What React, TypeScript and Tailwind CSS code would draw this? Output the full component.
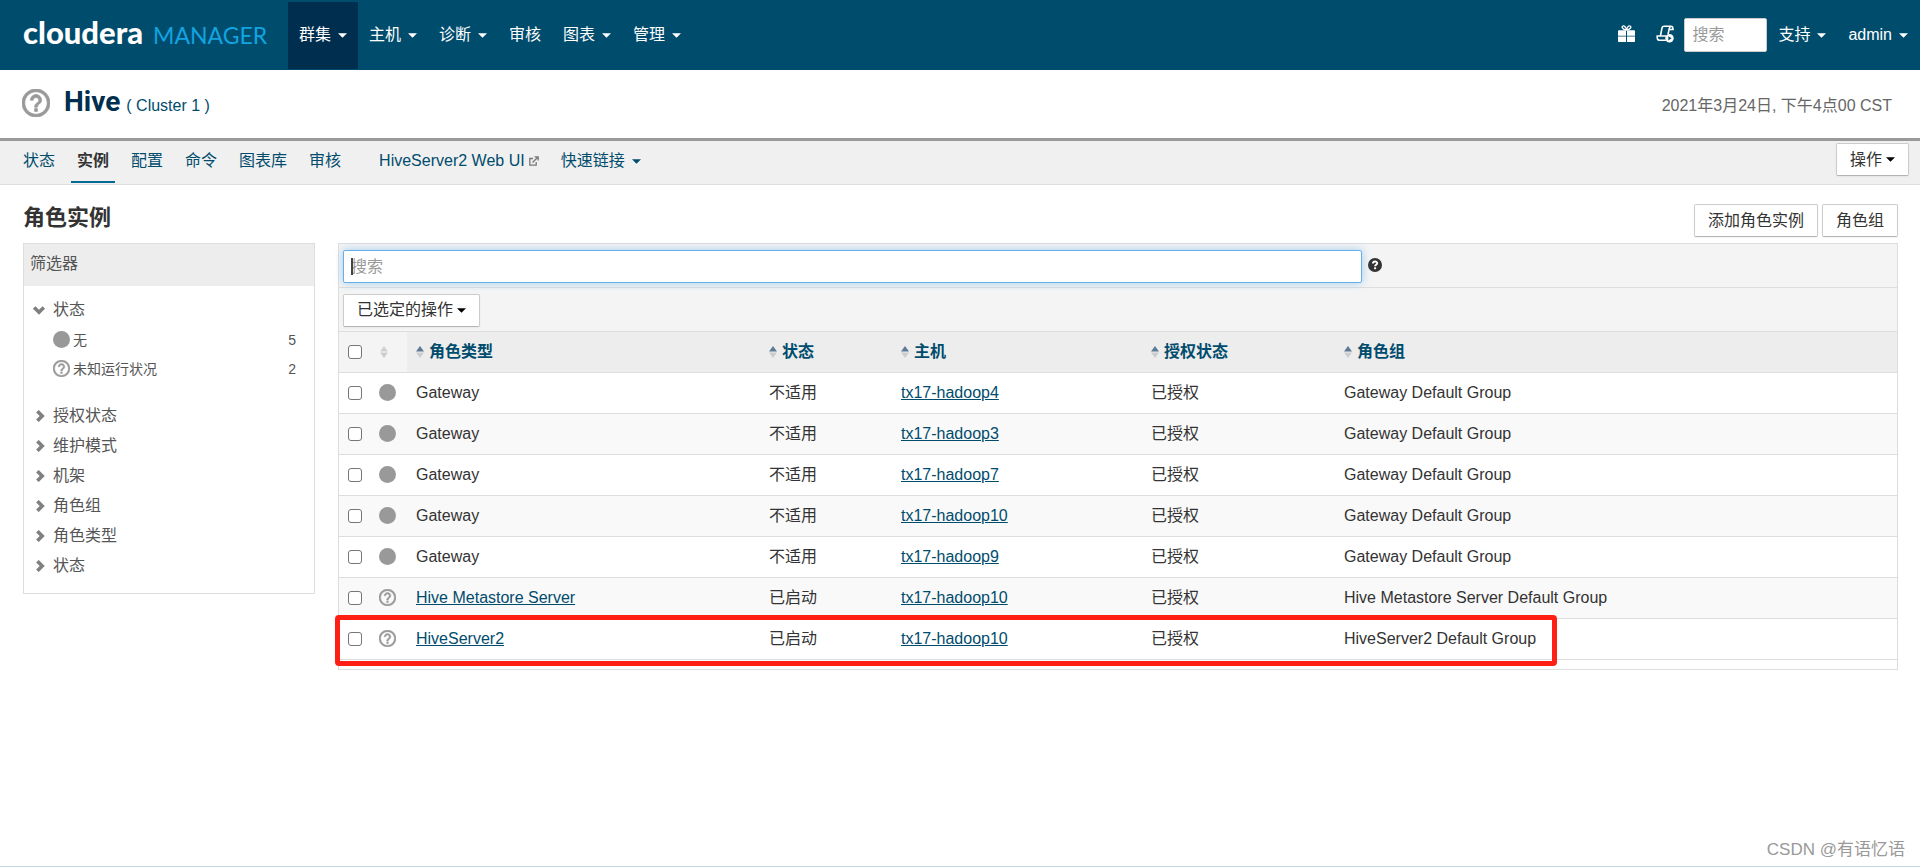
import type { ReactNode } from 'react';

const HELP_PATH =
  'M11 18h2v-2h-2v2zm1-16C6.48 2 2 6.48 2 12s4.48 10 10 10 10-4.48 10-10S17.52 2 12 2zm0 18c-4.41 0-8-3.59-8-8s3.59-8 8-8 8 3.59 8 8-3.59 8-8 8zm0-14c-2.21 0-4 1.79-4 4h2c0-1.1.9-2 2-2s2 .9 2 2c0 2-3 1.75-3 5h2c0-2.25 3-2.5 3-5 0-2.21-1.79-4-4-4z';

function Caret() {
  return (
    <svg viewBox="0 0 9 5" className="h-[5px] w-[9px] shrink-0" fill="currentColor" aria-hidden="true">
      <path d="M0 .3h9L4.500 4.800z" />
    </svg>
  );
}

function UnknownIcon({ className }: { className: string }) {
  return (
    <svg viewBox="2 2 20 20" className={className} fill="#999" aria-hidden="true">
      <path d={HELP_PATH} stroke="#999" strokeWidth="0.5" />
    </svg>
  );
}

function HealthIcon({ unknown }: { unknown: boolean }) {
  if (unknown) return <UnknownIcon className="size-[17px] shrink-0" />;
  return <span className="block size-[17px] shrink-0 rounded-full bg-[#999]" />;
}

function Chevron({ open }: { open?: boolean }) {
  return (
    <svg viewBox="0 0 12 12" className="size-3 shrink-0" fill="none" stroke="#808080" strokeWidth="3.6" aria-hidden="true">
      <path d={open ? 'M1.2 3.4 6 8.2l4.8-4.8' : 'M4.4 1.2 9.200 6l-4.8 4.8'} />
    </svg>
  );
}

function SortIcon({ faint }: { faint?: boolean }) {
  return (
    <svg viewBox="0 0 8 12" className="h-3 w-2 shrink-0" aria-hidden="true">
      <path d="M4 0 8 5.5H0z" fill={faint ? '#cfd1d3' : '#5d7a94'} />
      <path d="M4 12 8 6.5H0z" fill="#cbcdcf" />
    </svg>
  );
}

function Button({ children, caret }: { children: ReactNode; caret?: boolean }) {
  return (
    <button
      type="button"
      className="flex h-[33px] items-center gap-1 rounded-xs border border-[#ccc] border-b-[#b5b5b5] bg-white px-[13px] text-[#333] shadow-xs"
    >
      {children}
      {caret && (
        <span className="text-black">
          <Caret />
        </span>
      )}
    </button>
  );
}

const NAV = [
  { label: '群集', menu: true, active: true },
  { label: '主机', menu: true },
  { label: '诊断', menu: true },
  { label: '审核' },
  { label: '图表', menu: true },
  { label: '管理', menu: true },
];

function TopBar() {
  return (
    <header className="flex h-[70px] items-center bg-[#004c6d] pr-3 text-white">
      <a href="#home" className="flex w-[288px] items-baseline gap-2.5 pb-1 pl-[23px] leading-8">
        <span className="font-[Lato] text-[31px] font-black">cloudera</span>
        <span className="font-[Lato] text-[23px] text-[#12a4e0]">MANAGER</span>
      </a>
      <nav className="flex">
        {NAV.map((item) => (
          <a
            key={item.label}
            href="#nav"
            className={
              item.active
                ? 'flex h-[67px] items-center gap-[7px] bg-[#002e4f] px-[11px]'
                : 'flex h-[67px] items-center gap-[7px] px-[11px]'
            }
          >
            {item.label}
            {item.menu && <Caret />}
          </a>
        ))}
      </nav>
      <div className="ml-auto flex items-center">
        <button type="button" aria-label="新增功能" className="mr-[21px] mb-1">
          <svg viewBox="0 0 17 17" className="size-[17px]" fill="#fff" aria-hidden="true">
            <path d="M0 6q0-.8.8-.8H8v5.600H0zM9 5.200h7.200q.8 0 .8.800v4.800H9zM0 11.600h8V17H.8Q0 17 0 16.200zM9 11.600h8v4.600q0 .8-.8.8H9z" />
            <path
              d="M8.500 5.200C8 2.200 6.300.3 4.900 1 3.300 2 4.300 4.400 8.500 5.200 12.700 4.400 13.700 2 12.100 1 10.700.3 9 2.200 8.500 5.200z"
              fill="none"
              stroke="#fff"
              strokeWidth="1.3"
            />
          </svg>
        </button>
        <button type="button" aria-label="正在运行的命令" className="mr-[10px] mb-0.5">
          <svg viewBox="0 0 18 18" className="size-[18px]" fill="none" stroke="#fff" strokeWidth="1.6" aria-hidden="true">
            <path d="M4.500 10.500 6 3q.4-1.700 2-1.700h7.500q-1.800.2-2.200 2L12 9.500M15 1.300q2 0 2 3.200h-3.500M10 11H1.200q-.3 4 2 4.200h7" />
            <circle cx="13.5" cy="13.3" r="4.2" fill="#fff" stroke="none" />
            <path d="M12.300 11.200v4.200l3.300-2.100z" fill="#004c6d" stroke="none" />
          </svg>
        </button>
        <input
          aria-label="全局搜索"
          placeholder="搜索"
          className="h-[34px] w-[83px] rounded-xs border border-[#ccc] bg-white px-[7px] text-[#333] placeholder:text-[#999]"
        />
        <a href="#support" className="flex items-center gap-[7px] px-[11px]">
          支持
          <Caret />
        </a>
        <a href="#admin" className="flex items-center gap-[7px] pl-[11px]">
          admin
          <Caret />
        </a>
      </div>
    </header>
  );
}

function TitleBar() {
  return (
    <div className="flex h-[71px] items-center border-b-3 border-[#999] pr-7 pl-[22px]">
      <UnknownIcon className="mb-0.5 size-7" />
      <div className="ml-3.5 flex items-baseline gap-1.5 leading-8">
        <h1 className="font-[Roboto] text-[28px] font-bold text-[#002e4f]">Hive</h1>
        <a href="#cluster" className="text-[#004c6d]">
          ( Cluster 1 )
        </a>
      </div>
      <time className="mt-1 ml-auto text-[#666]">2021年3月24日, 下午4点00 CST</time>
    </div>
  );
}

const TABS = ['状态', '实例', '配置', '命令', '图表库', '审核'];

function TabBar() {
  return (
    <div className="flex h-11 justify-between border-b border-[#ddd] bg-[#f0f0f0] pr-[11px] pl-[17px]">
      <nav className="flex gap-2.5 text-[#004c6d]">
        {TABS.map((tab) => (
          <a
            key={tab}
            href="#tab"
            className={
              tab === '实例'
                ? 'flex h-[42px] items-center border-b-2 border-[#006a94] px-1.5 font-bold text-[#333]'
                : 'flex h-10 items-center px-1.5'
            }
          >
            {tab}
          </a>
        ))}
        <a href="#webui" className="ml-4 flex h-10 items-center gap-1 px-1.5">
          HiveServer2 Web UI
          <svg viewBox="0 0 10 10" className="size-2.5" fill="none" stroke="#777" strokeWidth="1.3" aria-hidden="true">
            <path d="M4 2.500H.8v6.700h6.400V6M3.500 6.500 9 1M5.500.8h3.700v3.700" />
          </svg>
        </a>
        <a href="#links" className="flex h-10 items-center gap-[7px] px-1.5">
          快速链接
          <Caret />
        </a>
      </nav>
      <div className="pt-0.5">
        <Button caret>操作</Button>
      </div>
    </div>
  );
}

const FILTERS = ['授权状态', '维护模式', '机架', '角色组', '角色类型', '状态'];

function FilterPanel() {
  return (
    <aside className="w-[292px] shrink-0 border border-[#ddd] pb-3 text-[#555]">
      <h3 className="flex h-[42px] items-center bg-[#ededed] px-1.5 pb-0.5">筛选器</h3>
      <button type="button" className="mt-[9px] flex h-[30px] w-full items-center gap-2 pl-[9px]">
        <Chevron open />
        状态
      </button>
      <ul className="mb-[18px] pr-[18px] pl-[29px] text-sm">
        <li className="flex h-[29px] items-center gap-[3px]">
          <HealthIcon unknown={false} />
          无<span className="ml-auto">5</span>
        </li>
        <li className="flex h-[29px] items-center gap-[3px]">
          <HealthIcon unknown />
          未知运行状况<span className="ml-auto">2</span>
        </li>
      </ul>
      {FILTERS.map((name, i) => (
        <button key={i} type="button" className="flex h-[30px] w-full items-center gap-2 pl-[9px]">
          <Chevron />
          {name}
        </button>
      ))}
    </aside>
  );
}

const ROWS = [
  { role: 'Gateway', status: '不适用', host: 'tx17-hadoop4', group: 'Gateway Default Group' },
  { role: 'Gateway', status: '不适用', host: 'tx17-hadoop3', group: 'Gateway Default Group' },
  { role: 'Gateway', status: '不适用', host: 'tx17-hadoop7', group: 'Gateway Default Group' },
  { role: 'Gateway', status: '不适用', host: 'tx17-hadoop10', group: 'Gateway Default Group' },
  { role: 'Gateway', status: '不适用', host: 'tx17-hadoop9', group: 'Gateway Default Group' },
  { role: 'Hive Metastore Server', status: '已启动', host: 'tx17-hadoop10', group: 'Hive Metastore Server Default Group' },
  { role: 'HiveServer2', status: '已启动', host: 'tx17-hadoop10', group: 'HiveServer2 Default Group' },
];

const COLUMNS = [
  { label: '角色类型', width: 'w-[353px]' },
  { label: '状态', width: 'w-[132px]' },
  { label: '主机', width: 'w-[250px]' },
  { label: '授权状态', width: 'w-[193px]' },
  { label: '角色组', width: '' },
];

function Check({ label }: { label: string }) {
  return (
    <input
      type="checkbox"
      aria-label={label}
      className="block size-3.5 appearance-none rounded-[3px] border border-[#767676] bg-white"
    />
  );
}

function InstanceTable() {
  return (
    <table className="w-full table-fixed border-collapse text-left">
      <thead>
        <tr className="h-10 border-b border-[#ddd] bg-[#ededed] text-[#004c6d]">
          <th className="w-[37px] bg-[#f4f4f4] pl-[9px]">
            <Check label="全选" />
          </th>
          <th className="w-[31px] bg-[#f4f4f4] pl-1">
            <SortIcon faint />
          </th>
          {COLUMNS.map((col) => (
            <th key={col.label} className={`${col.width} p-0 pl-[9px]`}>
              <button type="button" className="flex items-center gap-[5px] font-bold">
                <SortIcon />
                {col.label}
              </button>
            </th>
          ))}
        </tr>
      </thead>
      <tbody>
        {ROWS.map((row, i) => (
          <tr key={i} className="h-[41px] border-b border-[#ddd] even:bg-[#f9f9f9]">
            <td className="pl-[9px]">
              <Check label={`${row.role} ${row.host}`} />
            </td>
            <td className="pl-[3px]">
              <HealthIcon unknown={row.role !== 'Gateway'} />
            </td>
            <td className="pl-[9px]">
              {row.role === 'Gateway' ? (
                row.role
              ) : (
                <a href="#role" className="text-[#004c6d] underline">
                  {row.role}
                </a>
              )}
            </td>
            <td className="pl-[9px]">{row.status}</td>
            <td className="pl-[9px]">
              <a href="#host" className="text-[#004c6d] underline">
                {row.host}
              </a>
            </td>
            <td className="pl-[9px]">已授权</td>
            <td className="pl-[9px]">{row.group}</td>
          </tr>
        ))}
      </tbody>
    </table>
  );
}

function InstancePanel() {
  return (
    <section className="relative min-w-0 grow border border-[#ddd] pb-[9px]">
      <div className="flex h-11 items-center gap-1.5 border-b border-[#ddd] bg-[#f4f4f4] pt-0.5 pl-1">
        <div className="relative w-[1019px]">
          <input
            aria-label="搜索角色实例"
            placeholder="搜索"
            className="block h-[33px] w-full rounded-xs border border-[#66afe9] bg-white px-[7px] shadow-[0_0_8px_rgba(102,175,233,0.6)] outline-none placeholder:text-[#999]"
          />
          <span className="absolute top-2 left-2 h-[17px] w-0.5 bg-[#444]" />
        </div>
        <svg viewBox="0 0 14 14" className="mb-1 size-3.5 shrink-0" aria-hidden="true">
          <circle cx="7" cy="7" r="7" fill="#333" />
          <path d="M4.900 5.500C5 2.800 9.200 2.900 9.200 5.300 9.200 6.800 7.100 6.700 7.100 8.300" fill="none" stroke="#fff" strokeWidth="1.9" />
          <path d="M6.100 9.300h2v1.900h-2z" fill="#fff" />
        </svg>
      </div>
      <div className="flex h-11 items-center border-b border-[#ddd] bg-[#f4f4f4] pt-px pl-1">
        <Button caret>已选定的操作</Button>
      </div>
      <InstanceTable />
      <div className="pointer-events-none absolute bottom-[3px] -left-1 h-[51px] w-[1222px] rounded-sm border-5 border-[#ff1f14]" />
    </section>
  );
}

export default function App() {
  return (
    <div className="relative min-h-screen border-b border-[#c5dbe3] bg-white font-['Liberation_Sans','Noto_Sans_CJK_SC',sans-serif] text-base leading-6 text-[#333]">
      <TopBar />
      <TitleBar />
      <TabBar />
      <main className="pr-[22px] pl-[23px]">
        <div className="flex h-[58px] items-center justify-between">
          <h2 className="mt-2 text-[22px] font-bold">角色实例</h2>
          <div className="mt-[13px] flex gap-1">
            <Button>添加角色实例</Button>
            <Button>角色组</Button>
          </div>
        </div>
        <div className="flex items-start gap-[23px]">
          <FilterPanel />
          <InstancePanel />
        </div>
      </main>
      <p className="absolute right-[15px] bottom-1 text-[17px] text-[#999]">CSDN @有语忆语</p>
    </div>
  );
}
